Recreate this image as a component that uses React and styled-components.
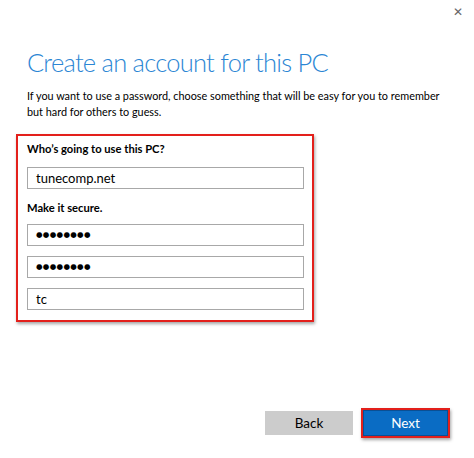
import React from 'react'
import styled, { createGlobalStyle } from 'styled-components'

const Global = createGlobalStyle`
  html, body {
    margin: 0;
    background: #fff;
  }
  body {
    font-family: Lato, "Open Sans", "Liberation Sans", sans-serif;
    color: #000;
  }
`

const Window = styled.div`
  width: 474px;
  height: 458px;
  box-sizing: border-box;
  position: relative;
  display: flex;
  flex-direction: column;
  padding: 0 0 0 27px;
  background: #fff;
`

const Close = styled.div`
  position: absolute;
  top: 6px;
  right: 11px;
  font-family: "DejaVu Sans", sans-serif;
  font-size: 12px;
  color: #666;
  line-height: 1;
`

const Title = styled.h1`
  margin: 44px 0 0;
  font-weight: 300;
  font-size: 25.5px;
  letter-spacing: -0.75px;
  line-height: 36px;
  color: #2b86d4;
`

const Intro = styled.p`
  margin: 8px 0 0;
  font-size: 10.85px;
  line-height: 16px;
  white-space: nowrap;
`

const Highlight = styled.div`
  margin: 14px 0 0 -11px;
  width: 298px;
  box-sizing: border-box;
  border: 2.5px solid #e3201b;
  box-shadow: 1px 2px 3px rgba(0, 0, 0, 0.35);
  padding: 5px 8px 10px 9px;
  display: flex;
  flex-direction: column;
`

const Label = styled.div`
  font-size: 11.2px;
  font-weight: 700;
  line-height: 16px;
  margin: ${p => p.$top || 0}px 0 ${p => p.$below || 8}px;
`

const Field = styled.div`
  height: 22px;
  box-sizing: border-box;
  border: 1.5px solid #a8a8a8;
  display: flex;
  align-items: center;
  padding: 0 8px;
  font-size: 13px;
  margin-bottom: ${p => p.$gap || 0}px;
`

const Dots = styled.span`
  font-family: "DejaVu Sans", sans-serif;
  font-size: 7.5px;
  letter-spacing: 0.3px;
  line-height: 1;
`

const Footer = styled.div`
  margin-top: auto;
  margin-bottom: 20px;
  display: flex;
  justify-content: flex-end;
  align-items: center;
  gap: 8px;
  padding-right: 24px;
`

const Button = styled.div`
  width: ${p => p.$w}px;
  height: 24px;
  display: flex;
  align-items: center;
  justify-content: center;
  font-size: 13.5px;
  background: ${p => (p.$primary ? '#0a6cc4' : '#cccccc')};
  color: ${p => (p.$primary ? '#fff' : '#000')};
`

const Ring = styled.div`
  border: 2px solid #e3201b;
  padding: 1px;
  box-shadow: 1px 2px 3px rgba(0, 0, 0, 0.35);
  background: #0a4f94;
`

export default function App() {
  return (
    <>
      <Global />
      <Window>
        <Close>✕</Close>
        <Title>Create an account for this PC</Title>
        <Intro>
          If you want to use a password, choose something that will be easy for you to remember
          <br />
          but hard for others to guess.
        </Intro>
        <Highlight>
          <Label $below={10}>Who’s going to use this PC?</Label>
          <Field>tunecomp.net</Field>
          <Label $top={11}>Make it secure.</Label>
          <Field $gap={10}><Dots>●●●●●●●●</Dots></Field>
          <Field $gap={10}><Dots>●●●●●●●●</Dots></Field>
          <Field>tc</Field>
        </Highlight>
        <Footer>
          <Button $w={88}>Back</Button>
          <Ring>
            <Button $w={83} $primary>Next</Button>
          </Ring>
        </Footer>
      </Window>
    </>
  )
}
